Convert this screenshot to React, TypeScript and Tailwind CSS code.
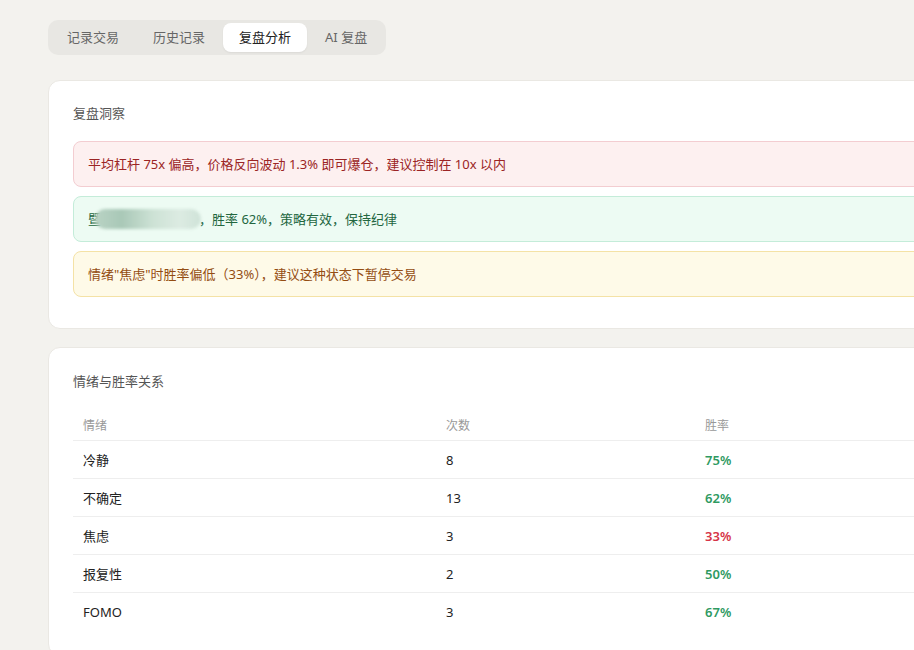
import { useState } from "react";

const tabs = ["记录交易", "历史记录", "复盘分析", "AI 复盘"];

const rows = [
  { mood: "冷静", count: 8, rate: 75 },
  { mood: "不确定", count: 13, rate: 62 },
  { mood: "焦虑", count: 3, rate: 33 },
  { mood: "报复性", count: 2, rate: 50 },
  { mood: "FOMO", count: 3, rate: 67 },
];

export default function App() {
  const [tab, setTab] = useState("复盘分析");

  return (
    <div
      className="min-h-screen w-screen overflow-hidden bg-[#f3f2ee] pl-12 pt-5"
      style={{ fontFamily: '"Noto Sans", "Noto Sans CJK SC", sans-serif' }}
    >
      <div className="inline-flex gap-[2px] rounded-[10px] bg-[#e8e7e3] p-[3px]">
        {tabs.map((t) => (
          <button
            key={t}
            onClick={() => setTab(t)}
            className={
              "h-[29px] rounded-[8px] px-4 text-[13px] leading-[29px] " +
              (tab === t ? "bg-white text-[#222] shadow-[0_1px_2px_rgba(0,0,0,0.06)]" : "text-[#666]")
            }
          >
            {t}
          </button>
        ))}
      </div>

      <div className="mt-[25px] w-[1000px] rounded-[12px] border border-[#eae8e3] bg-white px-6 pt-[22px] pb-[31px]">
        <div className="mb-[18px] text-[13px] leading-5 text-[#555]">复盘洞察</div>
        <div className="space-y-[9px]">
          <div className="rounded-[8px] border border-[#f3cdd1] bg-[#fdf0f0] px-[14px] py-3 text-[13px] leading-5 text-[#9b2424]">
            平均杠杆 75x 偏高，价格反向波动 1.3% 即可爆仓，建议控制在 10x 以内
          </div>
          <div className="flex items-center rounded-[8px] border border-[#c4ecd9] bg-[#edfbf3] px-[14px] py-3 text-[13px] leading-5 text-[#23663f]">
            <span>暨</span>
            <span className="ml-[-6px] mr-[-2px] inline-block h-[20px] w-[106px] rounded-full bg-[linear-gradient(90deg,#b9d3c4_0%,#a9c8b7_25%,#cde2d5_55%,#dcebe2_80%,#cfe3d8_100%)] blur-[1.5px]" />
            <span>，胜率 62%，策略有效，保持纪律</span>
          </div>
          <div className="rounded-[8px] border border-[#f4e2a6] bg-[#fefae8] px-[14px] py-3 text-[13px] leading-5 text-[#944d12]">
            情绪"焦虑"时胜率偏低（33%），建议这种状态下暂停交易
          </div>
        </div>
      </div>

      <div className="mt-[18px] w-[1000px] rounded-[12px] border border-[#eae8e3] bg-white px-6 pt-[23px] pb-6">
        <div className="mb-[16px] text-[13px] leading-5 text-[#555]">情绪与胜率关系</div>
        <div>
          <div className="grid grid-cols-[363px_259px_1fr] border-b border-[#eeeeee] text-[12px] leading-4 text-[#999]">
            <div className="px-[10px] pt-[11px] pb-[6px]">情绪</div>
            <div className="px-[10px] pt-[11px] pb-[6px]">次数</div>
            <div className="px-[10px] pt-[11px] pb-[6px]">胜率</div>
          </div>
          {rows.map((r, i) => (
            <div
              key={r.mood}
              className={
                "grid h-[38px] grid-cols-[363px_259px_1fr] items-center text-[13px] leading-5 text-[#222] " +
                (i < rows.length - 1 ? "border-b border-[#eeeeee]" : "")
              }
            >
              <div className="px-[10px]">{r.mood}</div>
              <div className="px-[10px]">{r.count}</div>
              <div
                className={
                  "px-[10px] font-semibold " + (r.rate < 50 ? "text-[#d63447]" : "text-[#2f9a62]")
                }
              >
                {r.rate}%
              </div>
            </div>
          ))}
        </div>
      </div>
    </div>
  );
}
